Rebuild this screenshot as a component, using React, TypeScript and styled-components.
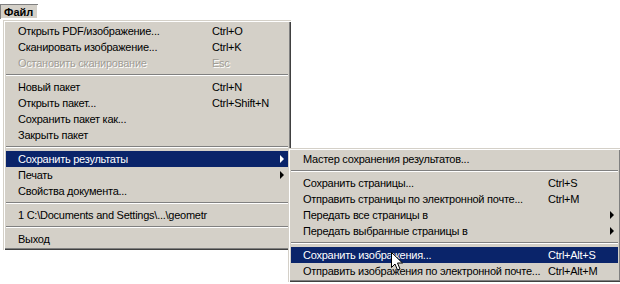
import React from "react";
import styled, { createGlobalStyle, css } from "styled-components";

const Global = createGlobalStyle`
  html, body { margin: 0; padding: 0; background: #ffffff; }
  body { font-family: "Liberation Sans", Arial, sans-serif; font-size: 11px; color: #000; letter-spacing: -0.25px; }
  #root { width: 620px; height: 284px; overflow: hidden; }
`;

const Page = styled.div`
  position: relative;
  width: 620px;
  height: 284px;
  padding-top: 4px;
  box-sizing: border-box;
`;

const MenuBar = styled.div`
  display: flex;
  height: 15px;
`;

const MenuBarItem = styled.div`
  display: inline-flex;
  align-items: center;
  height: 15px;
  padding: 0 5px 0 4px;
  background: #d4d0c8;
  box-shadow: inset 1px 1px 0 #808080, inset -1px -1px 0 #ffffff;
  font-weight: bold;
  letter-spacing: 0;
`;

const Popup = styled.div<{ $width: number }>`
  position: relative;
  width: ${(p) => p.$width}px;
  box-sizing: border-box;
  background: #d4d0c8;
  padding: 3px;
  box-shadow:
    inset 1px 1px 0 #d4d0c8,
    inset 2px 2px 0 #ffffff,
    inset -1px -1px 0 #404040,
    inset -2px -2px 0 #808080;
`;

const MainMenu = styled(Popup)`
  margin: 1px 0 0 3px;
`;

const SubMenu = styled(Popup)`
  position: absolute;
  left: 285px;
  top: 128px;
`;

const Row = styled.div<{ $label: number; $active?: boolean; $disabled?: boolean }>`
  display: grid;
  grid-template-columns: ${(p) => p.$label}px 1fr 12px;
  align-items: center;
  height: 16px;
  padding-left: 12px;
  white-space: nowrap;
  color: #000;
  ${(p) =>
    p.$active &&
    css`
      background: #0a246a;
      color: #ffffff;
    `}
  ${(p) =>
    p.$disabled &&
    css`
      color: #a09d96;
      text-shadow: 1px 1px 0 #ffffff;
    `}
`;

const Label = styled.span``;

const Shortcut = styled.span``;

const Arrow = styled.span<{ $active?: boolean }>`
  justify-self: end;
  margin-right: 4px;
  width: 0;
  height: 0;
  border-top: 4px solid transparent;
  border-bottom: 4px solid transparent;
  border-left: 4px solid ${(p) => (p.$active ? "#ffffff" : "#000000")};
`;

const Separator = styled.div`
  height: 0;
  margin: 3px 0;
  border-top: 1px solid #808080;
  border-bottom: 1px solid #ffffff;
`;

const Cursor = styled.svg`
  position: absolute;
  left: 391px;
  top: 252px;
`;

type Item =
  | { sep: true }
  | { label: string; shortcut?: string; arrow?: boolean; active?: boolean; disabled?: boolean; sep?: false };

const mainItems: Item[] = [
  { label: "Открыть PDF/изображение...", shortcut: "Ctrl+O" },
  { label: "Сканировать изображение...", shortcut: "Ctrl+K" },
  { label: "Остановить сканирование", shortcut: "Esc", disabled: true },
  { sep: true },
  { label: "Новый пакет", shortcut: "Ctrl+N" },
  { label: "Открыть пакет...", shortcut: "Ctrl+Shift+N" },
  { label: "Сохранить пакет как..." },
  { label: "Закрыть пакет" },
  { sep: true },
  { label: "Сохранить результаты", arrow: true, active: true },
  { label: "Печать", arrow: true },
  { label: "Свойства документа..." },
  { sep: true },
  { label: "1 C:\\Documents and Settings\\...\\geometr" },
  { sep: true },
  { label: "Выход" },
];

const subItems: Item[] = [
  { label: "Мастер сохранения результатов..." },
  { sep: true },
  { label: "Сохранить страницы...", shortcut: "Ctrl+S" },
  { label: "Отправить страницы по электронной почте...", shortcut: "Ctrl+M" },
  { label: "Передать все страницы в", arrow: true },
  { label: "Передать выбранные страницы в", arrow: true },
  { sep: true },
  { label: "Сохранить изображения...", shortcut: "Ctrl+Alt+S", active: true },
  { label: "Отправить изображения по электронной почте...", shortcut: "Ctrl+Alt+M" },
];

function renderItems(items: Item[], labelWidth: number) {
  return items.map((it, i) =>
    it.sep ? (
      <Separator key={i} />
    ) : (
      <Row key={i} $label={labelWidth} $active={it.active} $disabled={it.disabled}>
        <Label>{it.label}</Label>
        <Shortcut>{it.shortcut ?? ""}</Shortcut>
        {it.arrow ? <Arrow $active={it.active} /> : <span />}
      </Row>
    )
  );
}

export default function App() {
  return (
    <>
      <Global />
      <Page>
        <MenuBar>
          <MenuBarItem>Файл</MenuBarItem>
        </MenuBar>
        <MainMenu $width={288}>
          {renderItems(mainItems, 194)}
          <SubMenu $width={333}>{renderItems(subItems, 245)}</SubMenu>
        </MainMenu>
        <Cursor width="13" height="20" viewBox="0 0 13 20">
          <path d="M0.5 0.5 L0.5 15.5 L4 12 L6.5 18 L9 17 L6.5 11 L11.5 11 Z" fill="#ffffff" stroke="#000000" strokeWidth="1" />
        </Cursor>
      </Page>
    </>
  );
}
